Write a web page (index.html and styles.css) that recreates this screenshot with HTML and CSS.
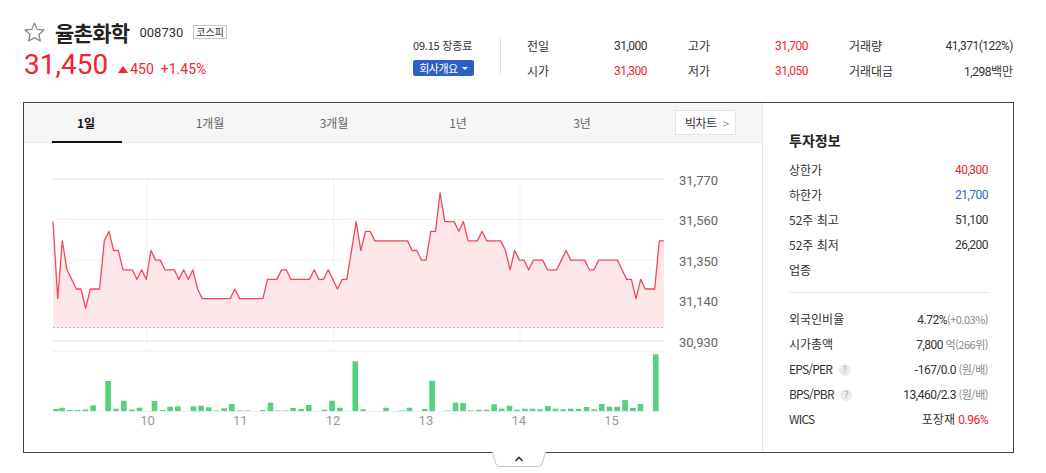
FILE: index.html
```html
<!DOCTYPE html>
<html lang="ko">
<head>
    <meta charset="UTF-8">
    <title>율촌화학 - 종목정보</title>
    <link rel="stylesheet" href="styles.css">
</head>
<body>

<div class="wrap">
    <!-- 종목 요약 -->
    <div class="summary">
        <div class="title-block">
            <div class="name-row">
                <svg class="star" width="21" height="20" viewBox="0 0 21 20">
                    <path d="M10.5 1.2l2.8 6.1 6.6.7-5 4.5 1.4 6.5-5.8-3.4-5.8 3.4 1.4-6.5-5-4.5 6.6-.7z" fill="none" stroke="#8a8a8a" stroke-width="1.3" stroke-linejoin="round"/>
                </svg>
                <h2 class="name">율촌화학</h2>
                <span class="code">008730</span>
                <span class="market">코스피</span>
            </div>
            <div class="price-row">
                <span class="now">31,450</span>
                <span class="diff"><span class="arrow"></span>450</span>
                <span class="rate">+1.45%</span>
            </div>
        </div>
        <div class="status">
            <div class="date">09.15 장종료</div>
            <a class="btn-company">회사개요 <span class="caret"></span></a>
        </div>
        <div class="divider"></div>
        <div class="quote-table">
            <div class="cell"><span>전일</span><span class="num">31,000</span></div>
            <div class="cell"><span>고가</span><span class="num up">31,700</span></div>
            <div class="cell"><span>거래량</span><span class="num">41,371(122%)</span></div>
            <div class="cell"><span>시가</span><span class="num up">31,300</span></div>
            <div class="cell"><span>저가</span><span class="num up">31,050</span></div>
            <div class="cell"><span>거래대금</span><span class="num">1,298<span class="kr">백만</span></span></div>
        </div>
    </div>

    <!-- 차트 + 투자정보 -->
    <div class="board">
        <div class="chart-area">
            <div class="tabs">
                <a class="tab on">1일</a>
                <a class="tab">1개월</a>
                <a class="tab">3개월</a>
                <a class="tab">1년</a>
                <a class="tab">3년</a>
                <a class="btn-big">빅차트 <span class="gt">&gt;</span></a>
            </div>
            <svg id="chart" width="738" height="309" viewBox="24 143 738 309"></svg>
        </div>
        <div class="invest">
            <h3>투자정보</h3>
            <div class="row"><span>상한가</span><span class="num up">40,300</span></div>
            <div class="row"><span>하한가</span><span class="num down">21,700</span></div>
            <div class="row"><span>52주 최고</span><span class="num">51,100</span></div>
            <div class="row"><span>52주 최저</span><span class="num">26,200</span></div>
            <div class="row"><span>업종</span><span></span></div>
            <hr>
            <div class="row"><span>외국인비율</span><span class="num">4.72%<span class="sub">(+0.03%)</span></span></div>
            <div class="row"><span>시가총액</span><span class="num">7,800 <span class="sub">억(266위)</span></span></div>
            <div class="row"><span class="en">EPS/PER <i class="help">?</i></span><span class="num">-167/0.0 <span class="sub">(원/배)</span></span></div>
            <div class="row"><span class="en">BPS/PBR <i class="help">?</i></span><span class="num">13,460/2.3 <span class="sub">(원/배)</span></span></div>
            <div class="row"><span class="en">WICS</span><span>포장재 <span class="num up">0.96%</span></span></div>
        </div>
    </div>

    <div class="fold">
        <svg width="54" height="15" viewBox="0 0 54 15">
            <path d="M0.5 0 L4 12 Q4.8 14.5 7.5 14.5 L46.5 14.5 Q49.2 14.5 50 12 L53.5 0" fill="#fff" stroke="#c4c4c4"/>
            <path d="M23.5 9 L27 5.5 L30.5 9" fill="none" stroke="#333" stroke-width="1.6"/>
        </svg>
    </div>
</div>

<script>
    const prices = [
        31550, 31150, 31450, 31300, 31250, 31200, 31200, 31100, 31200, 31200,
        31200, 31450, 31500, 31400, 31400, 31300, 31300, 31300, 31250, 31300,
        31250, 31400, 31350, 31350, 31300, 31300, 31300, 31250, 31300, 31250,
        31300, 31200, 31150, 31150, 31150, 31150, 31150, 31150, 31150, 31200,
        31150, 31150, 31150, 31150, 31150, 31150, 31250, 31250, 31250, 31300,
        31300, 31250, 31250, 31250, 31250, 31250, 31300, 31250, 31250, 31300,
        31250, 31200, 31250, 31250, 31400, 31550, 31400, 31500, 31500, 31450,
        31450, 31450, 31450, 31450, 31450, 31450, 31450, 31400, 31400, 31350,
        31350, 31500, 31500, 31700, 31550, 31550, 31550, 31500, 31550, 31450,
        31450, 31450, 31500, 31450, 31450, 31450, 31450, 31400, 31300, 31400,
        31350, 31350, 31300, 31350, 31350, 31350, 31300, 31300, 31300, 31350,
        31400, 31350, 31350, 31350, 31350, 31300, 31300, 31350, 31350, 31350,
        31350, 31350, 31300, 31250, 31250, 31150, 31250, 31200, 31200, 31200,
        31450, 31450
    ];
    // 거래량 막대 [x, 높이]
    const vols = [
        [53.3, 2], [59.3, 3.3], [67, 1], [74.7, 1], [82.7, 1.5], [90.3, 5.7], [105.3, 30],
        [113.3, 2.3], [121, 10.3], [129, 1.3], [136.7, 3.3], [151.7, 10], [159.7, 1],
        [167.3, 4.3], [175, 4.7], [190.7, 4.7], [198.3, 5.3], [206, 3.7], [213.7, 0.5],
        [221.3, 2.7], [229, 7], [237, 0.5], [244.7, 0.5], [260, 1], [267.7, 8.3],
        [275.7, 0.5], [283.3, 0.5], [290.3, 3], [298.3, 2], [306, 6], [321.7, 1.3],
        [329.3, 10.3], [337, 3.3], [352.5, 49.7], [360.3, 1.7], [383.3, 3.3], [399, 0.5],
        [406.7, 3.3], [422, 2], [429.3, 30.3], [445, 0.5], [452.7, 8.3], [460.3, 8],
        [468, 0.7], [476, 1.3], [483.7, 1.3], [491.3, 6.7], [499, 2.3], [506.7, 5.3],
        [514.3, 1.3], [522, 2.3], [529.7, 2.3], [537.3, 1.7], [545, 5], [552.7, 2.3],
        [560.3, 1.7], [568, 2.3], [575.7, 2], [583.7, 4], [591.3, 1.7], [599, 7],
        [606.7, 4.3], [614.3, 4.3], [622.3, 11], [630, 3], [637.7, 7], [653, 56.7]
    ];

    const left = 53, right = 664, base = 31000;
    const step = (right - left) / (prices.length - 1);
    function py(p) {
        return 341 - (p - 30930) * 0.1925;
    }

    let svg = '';
    // 가로 그리드
    [179, 219.5, 260, 300.5, 341].forEach(function (gy, i) {
        const c = (i === 0 || i === 4) ? '#e2e2ea' : '#f1f1f1';
        svg += '<line x1="' + left + '" x2="' + right + '" y1="' + gy + '" y2="' + gy + '" stroke="' + c + '"/>';
    });
    // 세로 그리드
    [147, 333.5, 520].forEach(function (gx) {
        svg += '<line x1="' + gx + '" x2="' + gx + '" y1="179" y2="345" stroke="#f1f1f1"/>';
    });

    let pts = prices.map(function (p, i) {
        return (left + i * step).toFixed(1) + ',' + py(p).toFixed(1);
    });
    const by = py(base).toFixed(1);
    svg += '<polygon points="' + left + ',' + by + ' ' + pts.join(' ') + ' ' + (left + (prices.length - 1) * step).toFixed(1) + ',' + by + '" fill="#fde7e9"/>';
    svg += '<line x1="' + left + '" x2="' + right + '" y1="' + by + '" y2="' + by + '" stroke="#bdb4c4" stroke-dasharray="2,2"/>';
    svg += '<polyline points="' + pts.join(' ') + '" fill="none" stroke="#f4485b" stroke-width="1.3" stroke-linejoin="round"/>';

    // 가격 축
    ['31,770', '31,560', '31,350', '31,140', '30,930'].forEach(function (t, i) {
        svg += '<text class="ylab" x="679" y="' + (184.5 + i * 40.5) + '">' + t + '</text>';
    });

    // 거래량
    svg += '<line x1="' + left + '" x2="' + right + '" y1="351" y2="351" stroke="#ececf0"/>';
    vols.forEach(function (v) {
        svg += '<rect x="' + v[0] + '" y="' + (411 - v[1]) + '" width="5.6" height="' + v[1] + '" fill="#55d17f"/>';
    });
    svg += '<line x1="' + left + '" x2="' + right + '" y1="411.5" y2="411.5" stroke="#ececf0"/>';

    ['10', '11', '12', '13', '14', '15'].forEach(function (t, i) {
        svg += '<text class="xlab" x="' + (147.5 + i * 92.8) + '" y="425">' + t + '</text>';
    });

    document.getElementById('chart').innerHTML = svg;
</script>

</body>
</html>
```

FILE: styles.css
```css
body {
    margin: 0;
    font-family: "Noto Sans CJK KR", sans-serif;
    color: #333;
    background: #fff;
}
.wrap {
    width: 991px;
    padding: 20px 0 0 23px;
}
.num {
    font-family: Roboto, "Noto Sans CJK KR", sans-serif;
    letter-spacing: -0.5px;
}
.up {
    color: #f3222d;
}
.down {
    color: #2f66d4;
}

/* 종목 요약 */
.summary {
    display: flex;
    align-items: flex-start;
    height: 82px;
}
.title-block {
    width: 390px;
    padding-left: 1px;
    box-sizing: border-box;
}
.name-row {
    display: flex;
    align-items: center;
    height: 24px;
}
.star {
    margin-right: 10px;
}
.name {
    margin: 0;
    font-size: 21px;
    line-height: 24px;
    font-weight: bold;
    letter-spacing: -0.7px;
    color: #222;
}
.code {
    margin-left: 10px;
    font-family: Roboto, sans-serif;
    font-size: 13px;
    color: #333;
}
.market {
    margin-left: 10px;
    border: 1px solid #c8c8c8;
    font-size: 10px;
    line-height: 12px;
    padding: 0 2px;
    color: #333;
}
.price-row {
    display: flex;
    align-items: baseline;
    margin-top: 5px;
    height: 32px;
    font-family: Roboto, sans-serif;
    color: #f3222d;
}
.now {
    font-size: 28px;
    line-height: 32px;
}
.diff {
    margin-left: 10px;
    font-size: 14px;
}
.arrow {
    display: inline-block;
    width: 0;
    height: 0;
    border-left: 5.5px solid transparent;
    border-right: 5.5px solid transparent;
    border-bottom: 7px solid #f3222d;
    margin-right: 2px;
    vertical-align: 1px;
}
.rate {
    margin-left: 7px;
    font-size: 14px;
}
.status {
    width: 61px;
    margin-top: 18px;
}
.date {
    font-size: 11px;
    line-height: 14px;
    letter-spacing: -0.2px;
    white-space: nowrap;
}
.btn-company {
    display: flex;
    align-items: center;
    justify-content: center;
    margin-top: 8px;
    height: 16px;
    background: #2e5fc4;
    border-radius: 2px;
    color: #fff;
    font-size: 11px;
    letter-spacing: -0.5px;
}
.caret {
    margin-left: 4px;
    border-left: 3px solid transparent;
    border-right: 3px solid transparent;
    border-top: 3px solid #fff;
}
.divider {
    width: 1px;
    height: 37px;
    margin: 18px 0 0 26px;
    background: #e3e3e3;
}
.quote-table {
    display: grid;
    grid-template-columns: 120px 120px 164px;
    column-gap: 41px;
    margin: 13px 0 0 26px;
    font-size: 12px;
}
.cell {
    display: flex;
    justify-content: space-between;
    align-items: center;
    height: 25px;
}
.kr {
    font-family: "Noto Sans CJK KR", sans-serif;
    letter-spacing: 0;
}

/* 차트 박스 */
.board {
    display: flex;
    border: 1px solid #444;
    height: 349px;
}
.chart-area {
    width: 738px;
}
.tabs {
    display: flex;
    align-items: center;
    height: 39px;
    background: #f6f6f6;
    border-bottom: 1px solid #e6e6e6;
    font-size: 12px;
}
.tab {
    position: relative;
    width: 124px;
    text-align: center;
    line-height: 39px;
    color: #666;
}
.tab.on {
    color: #111;
    font-weight: bold;
}
.tab.on::after {
    content: "";
    position: absolute;
    left: 28px;
    right: 26px;
    bottom: -1px;
    height: 2px;
    background: #111;
}
.btn-big {
    margin-left: 31px;
    height: 23px;
    line-height: 23px;
    padding: 0 6px 0 9px;
    background: #fff;
    border: 1px solid #e3e3e3;
    font-size: 12px;
    color: #333;
    letter-spacing: -0.5px;
}
.gt {
    margin-left: 3px;
    color: #999;
}
#chart {
    display: block;
}
#chart .ylab {
    font-family: Roboto, sans-serif;
    font-size: 13px;
    fill: #666;
}
#chart .xlab {
    font-family: Roboto, sans-serif;
    font-size: 13px;
    fill: #999;
    text-anchor: middle;
}

/* 투자정보 */
.invest {
    flex: 1;
    border-left: 1px solid #e6e6e6;
    padding: 25px 25px 0 26px;
    font-size: 12px;
}
.invest h3 {
    margin: 0 0 5px;
    font-size: 14px;
    line-height: 24px;
    color: #222;
}
.row {
    display: flex;
    justify-content: space-between;
    align-items: center;
    height: 25px;
}
.invest hr {
    border: 0;
    border-top: 1px solid #e6e6e6;
    margin: 10px 0 13px;
}
.en {
    letter-spacing: -0.8px;
}
.sub {
    font-family: "Noto Sans CJK KR", sans-serif;
    font-size: 11px;
    color: #888;
    letter-spacing: -0.5px;
}
.help {
    display: inline-block;
    width: 12px;
    height: 12px;
    margin-left: 4px;
    border-radius: 50%;
    background: #ececec;
    color: #aaa;
    font-style: normal;
    font-size: 9px;
    line-height: 12px;
    text-align: center;
    letter-spacing: 0;
    vertical-align: 1px;
}
.fold {
    display: flex;
    justify-content: center;
    margin-top: -1px;
}
.fold svg {
    display: block;
}
```
